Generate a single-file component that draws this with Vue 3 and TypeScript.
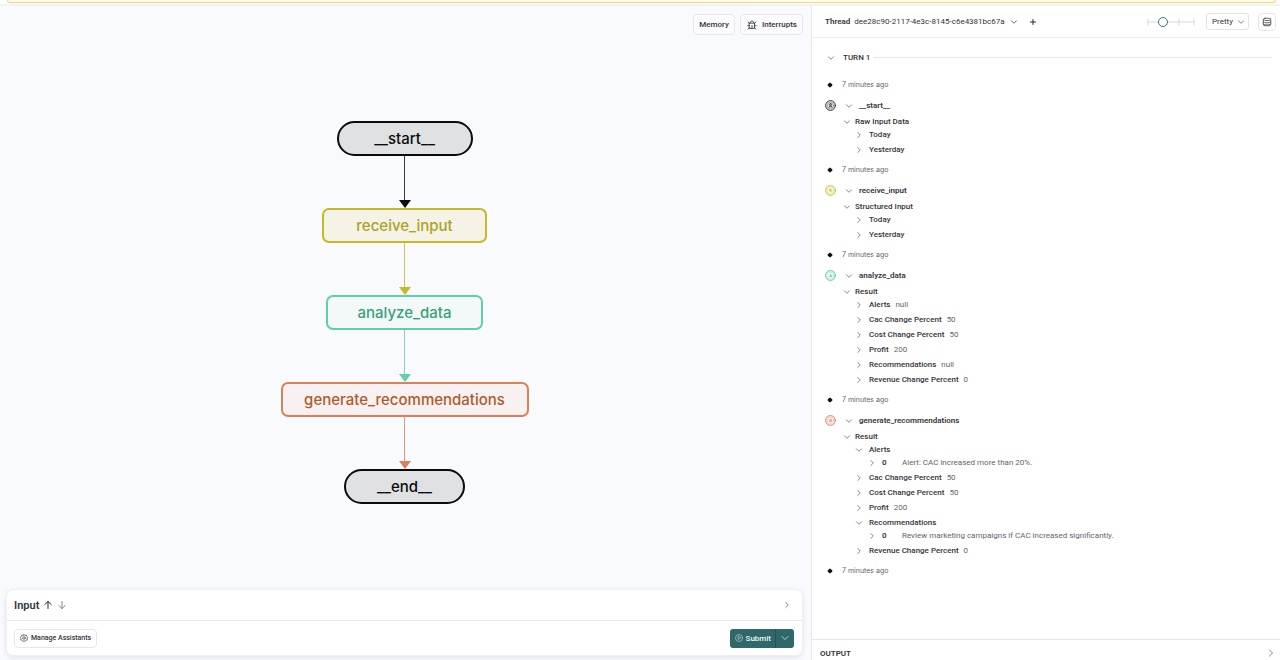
<script setup lang="ts">
import { reactive, ref } from 'vue'

interface Item { index: number; text: string }
interface Field { label: string; value?: string; open?: boolean; items?: Item[] }
interface Step {
  name: string
  letter: string
  tone: string
  section: string
  open: boolean
  sectionOpen: boolean
  fields: Field[]
}

const nodes = [
  { name: '__start__', kind: 'start' },
  { name: 'receive_input', kind: 'receive' },
  { name: 'analyze_data', kind: 'analyze' },
  { name: 'generate_recommendations', kind: 'generate' },
  { name: '__end__', kind: 'end' },
]

const steps = reactive<Step[]>([
  {
    name: '__start__', letter: '', tone: 'start', section: 'Raw Input Data', open: true, sectionOpen: true,
    fields: [{ label: 'Today' }, { label: 'Yesterday' }],
  },
  {
    name: 'receive_input', letter: 'R', tone: 'receive', section: 'Structured Input', open: true, sectionOpen: true,
    fields: [{ label: 'Today' }, { label: 'Yesterday' }],
  },
  {
    name: 'analyze_data', letter: 'A', tone: 'analyze', section: 'Result', open: true, sectionOpen: true,
    fields: [
      { label: 'Alerts', value: 'null' },
      { label: 'Cac Change Percent', value: '50' },
      { label: 'Cost Change Percent', value: '50' },
      { label: 'Profit', value: '200' },
      { label: 'Recommendations', value: 'null' },
      { label: 'Revenue Change Percent', value: '0' },
    ],
  },
  {
    name: 'generate_recommendations', letter: 'G', tone: 'generate', section: 'Result', open: true, sectionOpen: true,
    fields: [
      { label: 'Alerts', open: true, items: [{ index: 0, text: 'Alert: CAC increased more than 20%.' }] },
      { label: 'Cac Change Percent', value: '50' },
      { label: 'Cost Change Percent', value: '50' },
      { label: 'Profit', value: '200' },
      { label: 'Recommendations', open: true, items: [{ index: 0, text: 'Review marketing campaigns if CAC increased significantly.' }] },
      { label: 'Revenue Change Percent', value: '0' },
    ],
  },
])

const turnOpen = ref(true)
const detail = ref(1)
const view = ref('Pretty')
</script>

<template>
  <div class="app">
    <div class="notice"></div>
    <main class="panes">
      <section class="canvas">
        <div class="tools">
          <button type="button" class="btn">Memory</button>
          <button type="button" class="btn">
            <svg class="ic10" viewBox="0 0 24 24"><path d="M8 7V5.500C8 3.500 9.500 2.500 12 2.500s4 1 4 3V7M6 7.500h12v12.500h-12zM2 13.500h4M18 13.500h4M2.500 5l3.500 3.500M21.500 5 18 8.500M2.500 22l3.500-3.500M21.500 22 18 18.500M12 13v7" /></svg>
            Interrupts
          </button>
        </div>
        <div class="graph">
          <template v-for="(node, i) in nodes" :key="node.name">
            <div class="node" :class="node.kind">{{ node.name }}</div>
            <div v-if="i < nodes.length - 1" class="edge" :class="node.kind"></div>
          </template>
        </div>
        <form class="card" @submit.prevent>
          <div class="card-head">
            <h2>Input</h2>
            <button type="button" class="plain dark" aria-label="Previous">
              <svg class="ic10" viewBox="0 0 10 10"><path d="M5 8.500V1.500M1.800 4.500 5 1.500l3.200 3" /></svg>
            </button>
            <button type="button" class="plain" aria-label="Next">
              <svg class="ic10" viewBox="0 0 10 10"><path d="M5 1.500v7M1.800 5.500 5 8.500l3.200-3" /></svg>
            </button>
            <button type="button" class="plain push" aria-label="Expand input">
              <svg class="ic8" viewBox="0 0 8 8"><path d="M2.800 1.500 5.300 4l-2.500 2.500" /></svg>
            </button>
          </div>
          <div class="card-foot">
            <button type="button" class="btn small">
              <svg class="ic8" viewBox="0 0 24 24"><path d="M12 1.500l3 2.500 4-.5 1 4 3 2.500-1.500 3.500.5 4-4 1.200L15.500 22 12 20.500 8.500 22 6 18.700 2 17.500l.5-4L1 10l3-2.500 1-4 4 .5z" /><circle cx="12" cy="12" r="4" /></svg>
              Manage Assistants
            </button>
            <div class="submit">
              <button type="submit">
                <svg class="ic8" viewBox="0 0 24 24"><circle cx="12" cy="12" r="10.500" /><path d="M9.500 7.500v9l7-4.500z" /></svg>
                Submit
              </button>
              <button type="button" class="more" aria-label="Submit options">
                <svg class="ic8" viewBox="0 0 8 8"><path d="M1 2.500 4 5.500l3-3" /></svg>
              </button>
            </div>
          </div>
        </form>
      </section>

      <section class="thread">
        <header class="thread-head">
          <strong>Thread</strong>
          <button type="button" class="thread-id">
            dee28c90-2117-4e3c-8145-c6e4381bc67a
            <svg class="ic8" viewBox="0 0 8 8"><path d="M1.500 2.800 4 5.300l2.500-2.500" /></svg>
          </button>
          <button type="button" class="plain dark" aria-label="New thread">
            <svg class="ic8" viewBox="0 0 8 8"><path d="M4 1.500v5M1.500 4h5" /></svg>
          </button>
          <div class="slider">
            <svg viewBox="0 0 48 8" aria-hidden="true"><path d="M1 4h46M1 1v6M16.500 1v6M32 1v6M47 1v6" /></svg>
            <input v-model.number="detail" type="range" min="0" max="3" aria-label="Detail level" />
          </div>
          <div class="select">
            <select v-model="view" aria-label="View format">
              <option>Pretty</option>
              <option>JSON</option>
            </select>
            <svg class="ic8" viewBox="0 0 8 8"><path d="M1.500 2.800 4 5.300l2.500-2.500" /></svg>
          </div>
          <button type="button" class="btn square" aria-label="State store">
            <svg class="ic10" viewBox="0 0 24 24"><rect x="3" y="3" width="18" height="18" rx="4" /><path d="M3 6.500c4 3 14 3 18 0M3 12c4 3 14 3 18 0M3 17c4 3 14 3 18 0" /></svg>
          </button>
        </header>

        <div class="log">
          <div class="turn">
            <button type="button" class="toggle" :aria-expanded="turnOpen" @click="turnOpen = !turnOpen">
              <svg class="ic8" :class="{ shut: !turnOpen }" viewBox="0 0 8 8"><path d="M1.500 2.800 4 5.300l2.500-2.500" /></svg>
              TURN 1
            </button>
            <hr />
          </div>
          <template v-if="turnOpen">
            <article v-for="step in steps" :key="step.name" class="step">
              <p class="time"><i></i>7 minutes ago</p>
              <div class="step-head" :class="step.tone">
                <svg class="badge" viewBox="0 0 22 22" aria-hidden="true">
                  <circle cx="11" cy="11" r="9.800" class="outer" />
                  <circle cx="11" cy="11" r="6.500" class="inner" />
                  <text v-if="step.letter" x="11" y="14" text-anchor="middle">{{ step.letter }}</text>
                  <path v-else d="M8 14.500c.5-3 5.500-3 6 0M11 7.200a2 2 0 1 0 0 4 2 2 0 0 0 0-4" />
                </svg>
                <button type="button" class="toggle" :aria-expanded="step.open" @click="step.open = !step.open">
                  <svg class="ic8" :class="{ shut: !step.open }" viewBox="0 0 8 8"><path d="M1.500 2.800 4 5.300l2.500-2.500" /></svg>
                  {{ step.name }}
                </button>
              </div>
              <template v-if="step.open">
                <button type="button" class="toggle section" :aria-expanded="step.sectionOpen" @click="step.sectionOpen = !step.sectionOpen">
                  <svg class="ic8" :class="{ shut: !step.sectionOpen }" viewBox="0 0 8 8"><path d="M1.500 2.800 4 5.300l2.500-2.500" /></svg>
                  {{ step.section }}
                </button>
                <ul v-if="step.sectionOpen">
                  <li v-for="field in step.fields" :key="field.label">
                    <button type="button" class="toggle field" :class="{ opened: field.open }" :aria-expanded="!!field.open" @click="field.open = !field.open">
                      <svg class="ic8" :class="{ shut: !field.open }" viewBox="0 0 8 8"><path d="M1.500 2.800 4 5.300l2.500-2.500" /></svg>
                      {{ field.label }}
                      <span v-if="field.value" class="value">{{ field.value }}</span>
                    </button>
                    <ul v-if="field.open && field.items">
                      <li v-for="item in field.items" :key="item.index">
                        <button type="button" class="toggle item">
                          <svg class="ic8 shut" viewBox="0 0 8 8"><path d="M1.500 2.800 4 5.300l2.500-2.500" /></svg>
                          <span class="index">{{ item.index }}</span>
                          <span class="text">{{ item.text }}</span>
                        </button>
                      </li>
                    </ul>
                  </li>
                </ul>
              </template>
            </article>
            <p class="time"><i></i>7 minutes ago</p>
          </template>
        </div>

        <button type="button" class="output">
          OUTPUT
          <svg class="ic10" viewBox="0 0 10 10"><path d="M3.500 2 6.500 5l-3 3" /></svg>
        </button>
      </section>
    </main>
  </div>
</template>

<style>
body {
  margin: 0;
}
</style>

<style scoped>
.app {
  box-sizing: border-box;
  min-height: 100vh;
  display: flex;
  flex-direction: column;
  background: #fff;
  color: #33343a;
  font-family: Roboto, "Liberation Sans", sans-serif;
  font-size: 8px;
  line-height: 11px;
}
.app * {
  box-sizing: border-box;
}
button,
select {
  margin: 0;
  padding: 0;
  border: 0;
  background: none;
  color: inherit;
  font: inherit;
  cursor: pointer;
}
svg {
  flex: none;
  display: block;
  fill: none;
  stroke: currentColor;
  stroke-linecap: round;
  stroke-linejoin: round;
}
.ic8 { width: 8px; height: 8px; }
.ic10 { width: 10px; height: 10px; }
svg[viewBox="0 0 24 24"] { stroke-width: 2; }
.notice {
  height: 3px;
  margin: 0 4px 1px 7px;
  border: 1px solid #ffd66b;
  border-top: 0;
  border-radius: 0 0 3px 3px;
  background: #fffbee;
}
.panes {
  flex: 1;
  display: grid;
  grid-template-columns: minmax(0, 811fr) minmax(0, 469fr);
  border-top: 2px solid #f3f3f5;
}
.canvas {
  display: flex;
  flex-direction: column;
  background: #f9fafe;
}
.tools {
  display: flex;
  justify-content: flex-end;
  gap: 5px;
  padding: 8px 8px 0;
}
.btn {
  display: flex;
  align-items: center;
  gap: 5px;
  height: 21px;
  padding: 0 5px;
  border: 1px solid #e6e7ec;
  border-radius: 4px;
  background: #fcfcfe;
  font-weight: 500;
}
.btn .ic10 {
  margin-left: 1px;
}
.graph {
  flex: 1;
  display: flex;
  flex-direction: column;
  align-items: center;
  padding: 86px 2px 40px 0;
}
.node {
  display: flex;
  align-items: center;
  justify-content: center;
  height: 35px;
  border: 2px solid;
  border-radius: 7px;
  font-family: Inter, "Liberation Sans", sans-serif;
  font-size: 15px;
  font-weight: 500;
  line-height: 19px;
}
.node.start,
.node.end {
  border-color: #0b0b0d;
  border-radius: 18px;
  background: #e0e1e3;
  color: #0b0b0d;
}
.node.start { width: 136px; }
.node.end { width: 121px; }
.node.receive {
  width: 165px;
  border-color: #c4b926;
  background: #f4f3e6;
  color: #aca226;
}
.node.analyze {
  width: 157px;
  border-color: #5fcfa9;
  background: #f2f9f8;
  color: #37a178;
}
.node.generate {
  width: 248px;
  border-color: #d98258;
  background: #f7f2f1;
  color: #b0592c;
}
.edge {
  display: flex;
  flex-direction: column;
  align-items: center;
  width: 13px;
  height: 52px;
}
.edge::before {
  content: "";
  flex: 1;
  border-left: 1px solid;
  opacity: 0.8;
}
.edge::after {
  content: "";
  border: 6px solid transparent;
  border-top: 8px solid;
  border-bottom: 0;
}
.edge.start { color: #0b0b0d; }
.edge.receive { color: #c4b926; }
.edge.analyze { color: #62d1ab; }
.edge.generate { color: #d6825d; }
.card {
  margin: 0 9px 5px 7px;
  border-radius: 6px;
  background: #fff;
  box-shadow: 0 0 0 1px #eeeff3, 0 2px 6px #1018281f;
}
.card-head {
  display: flex;
  align-items: center;
  gap: 4px;
  height: 31px;
  padding: 0 11px 0 7px;
  border-bottom: 1px solid #e7e8ec;
}
h2 {
  margin: 0;
  font-size: 11px;
  font-weight: 600;
}
.plain {
  color: #85868d;
}
.plain.dark {
  color: #27272c;
}
.push {
  margin-left: auto;
}
.card-foot {
  display: flex;
  align-items: center;
  justify-content: space-between;
  height: 34px;
  padding: 0 8px 0 7px;
}
.small {
  gap: 3px;
  height: 19px;
  background: #fff;
  font-size: 7px;
}
.submit {
  display: flex;
  height: 19px;
  border-radius: 3px;
  background: #2f6868;
  color: #f0f6f5;
  font-weight: 500;
}
.submit button {
  display: flex;
  align-items: center;
  gap: 3px;
  padding: 0 4px 0 5px;
}
.submit .more {
  padding: 0 5px;
  border-left: 1px solid #225454;
}
.submit svg {
  color: #b7d0ce;
}
.thread {
  display: flex;
  flex-direction: column;
  border-left: 1px solid #e6e6ea;
}
.thread-head {
  display: flex;
  align-items: center;
  height: 32px;
  padding: 0 4px 0 13px;
  border-bottom: 1px solid #ececef;
}
strong {
  margin-right: 4px;
  font-weight: 600;
}
.thread-id {
  display: flex;
  align-items: center;
  gap: 5px;
  margin-right: 11px;
}
.thread-id svg {
  color: #66676e;
}
.slider {
  display: grid;
  align-items: center;
  width: 48px;
  margin: 0 11px 0 auto;
}
.slider svg {
  grid-area: 1 / 1;
  width: 48px;
  height: 8px;
  color: #d6d7db;
}
.slider input {
  grid-area: 1 / 1;
  z-index: 1;
  width: 58px;
  height: 12px;
  margin: 0 -5px;
  appearance: none;
  background: none;
}
.slider input::-webkit-slider-thumb {
  width: 10px;
  height: 10px;
  appearance: none;
  border: 1px solid #3a7b78;
  border-radius: 50%;
  background: #fff;
}
.select {
  display: grid;
  align-items: center;
  width: 43px;
  margin-right: 9px;
}
.select select {
  grid-area: 1 / 1;
  height: 17px;
  padding: 0 5px;
  appearance: none;
  border: 1px solid #e3e4e8;
  border-radius: 3px;
}
.select svg {
  grid-area: 1 / 1;
  justify-self: end;
  margin-right: 4px;
  pointer-events: none;
  color: #85868d;
}
.square {
  justify-content: center;
  width: 18px;
  height: 18px;
  padding: 0;
  background: #fff;
  color: #4a4b52;
}
.square .ic10 {
  margin: 0;
}
.log {
  flex: 1;
  padding: 11px 8px 0 13px;
}
.turn {
  display: flex;
  align-items: center;
  gap: 3px;
  height: 17px;
  margin: 0 0 8px 2px;
}
hr {
  flex: 1;
  margin: 0;
  border: 0;
  border-top: 1px solid #e6e6ea;
}
.toggle {
  display: flex;
  align-items: center;
  gap: 6px;
  height: 15px;
  font-weight: 500;
  text-align: left;
}
.toggle svg {
  stroke-width: 0.8;
  color: #66676e;
}
.shut {
  transform: rotate(-90deg);
}
.turn .toggle {
  gap: 8px;
}
p {
  margin: 0;
}
.time {
  display: flex;
  align-items: center;
  gap: 8px;
  height: 21px;
  color: #63646b;
  font-family: Inter, "Liberation Sans", sans-serif;
  font-size: 7px;
}
.time i {
  width: 9px;
  display: flex;
  justify-content: center;
}
.time i::before {
  content: "";
  width: 4px;
  height: 4px;
  transform: rotate(45deg);
  border-radius: 1px;
  background: #111;
}
.step {
  padding-bottom: 2px;
}
.step-head {
  display: flex;
  align-items: center;
  gap: 9px;
  height: 21px;
}
.step-head .toggle {
  font-weight: 600;
}
.badge {
  width: 11px;
  height: 11px;
  stroke-width: 1.8;
}
.badge text {
  fill: currentColor;
  stroke: none;
  font-size: 8px;
  font-weight: 700;
}
.badge .inner {
  stroke-width: 1;
  stroke-opacity: 0.5;
}
.step-head.start .badge { color: #2b2b2f; fill: #dcdddf; }
.step-head.receive .badge { color: #c4bb35; fill: #f8f7d9; }
.step-head.analyze .badge { color: #4fc59b; fill: #eefaf6; }
.step-head.generate .badge { color: #d8765a; fill: #fcf0ec; }
ul {
  margin: 0;
  padding: 0;
  list-style: none;
}
.section {
  gap: 4px;
  height: 11px;
  margin-left: 18px;
}
.field {
  margin-left: 30px;
}
.field.opened {
  height: 13px;
  padding-top: 2px;
}
.item {
  margin-left: 43px;
}
.value,
.text {
  color: #63646b;
  font-weight: 400;
}
.value {
  margin-left: -1px;
}
.index {
  width: 14px;
  font-weight: 600;
}
.output {
  display: flex;
  align-items: center;
  justify-content: space-between;
  height: 21px;
  padding: 6px 4px 0 8px;
  border-top: 1px solid #e6e6ea;
  font-weight: 600;
}
.output svg {
  color: #85868d;
}
</style>
